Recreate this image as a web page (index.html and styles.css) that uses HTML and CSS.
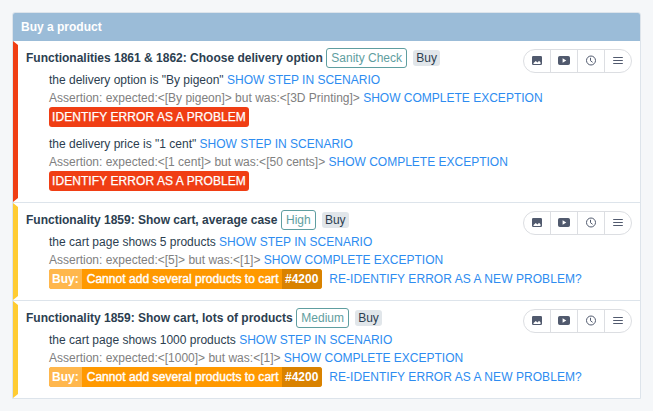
FILE: index.html
```
<!DOCTYPE html>
<html lang="en">
<head>
<meta charset="utf-8">
<title>Buy a product</title>
<link rel="stylesheet" href="styles.css">
</head>
<body>
<svg class="defs" width="0" height="0" aria-hidden="true">
  <symbol id="i-image" viewBox="0 0 12 12"><path fill="currentColor" fill-rule="evenodd" d="M2.200 1h7.600q1.200 0 1.200 1.200v6.600q0 1.200-1.200 1.200H2.200Q1 10 1 8.800V2.200Q1 1 2.200 1zM2.500 9h7V7.300L8 5.800 6.500 7.400 4.800 6 2.500 8z"/></symbol>
  <symbol id="i-video" viewBox="0 0 12 12"><path fill="currentColor" fill-rule="evenodd" d="M1.800 1h8.400Q12 1 12 2.800v5.400q0 1.800-1.800 1.800H1.800Q0 10 0 8.200V2.800Q0 1 1.800 1zM4.600 3.200v4.600L8.300 5.500z"/></symbol>
  <symbol id="i-clock" viewBox="0 0 12 12"><g fill="none" stroke="currentColor"><circle cx="6" cy="5.500" r="4.500"/><path d="M5.500 2.800V5.700L7.600 7.300"/></g></symbol>
  <symbol id="i-menu" viewBox="0 0 12 12"><path fill="none" stroke="currentColor" d="M1.200 2.500h9.600M1.200 5.500h9.600M1.200 8.500h9.600"/></symbol>
</svg>
<main class="card">
  <header class="card-header">Buy a product</header>

  <section class="item failed">
    <div class="content">
      <h2 class="title"><span>Functionalities 1861 &amp; 1862: Choose delivery option</span><span class="level">Sanity Check</span><span class="team">Buy</span></h2>
      <div class="step">
        <p>the delivery option is "By pigeon" <a>SHOW STEP IN SCENARIO</a></p>
        <p class="error">Assertion: expected:&lt;[By pigeon]&gt; but was:&lt;[3D Printing]&gt; <a>SHOW COMPLETE EXCEPTION</a></p>
        <div class="problem"><a class="identify">IDENTIFY ERROR AS A PROBLEM</a></div>
      </div>
      <div class="step">
        <p>the delivery price is "1 cent" <a>SHOW STEP IN SCENARIO</a></p>
        <p class="error">Assertion: expected:&lt;[1 cent]&gt; but was:&lt;[50 cents]&gt; <a>SHOW COMPLETE EXCEPTION</a></p>
        <div class="problem"><a class="identify">IDENTIFY ERROR AS A PROBLEM</a></div>
      </div>
    </div>
    <nav class="actions"><a><svg><use href="#i-image"/></svg></a><a><svg><use href="#i-video"/></svg></a><a><svg><use href="#i-clock"/></svg></a><a><svg><use href="#i-menu"/></svg></a></nav>
  </section>

  <section class="item known">
    <div class="content">
      <h2 class="title"><span>Functionality 1859: Show cart, average case</span><span class="level">High</span><span class="team">Buy</span></h2>
      <div class="step">
        <p>the cart page shows 5 products <a>SHOW STEP IN SCENARIO</a></p>
        <p class="error">Assertion: expected:&lt;[5]&gt; but was:&lt;[1]&gt; <a>SHOW COMPLETE EXCEPTION</a></p>
        <div class="problem"><span class="ticket"><b class="owner">Buy:</b><span class="name">Cannot add several products to cart</span><b class="number">#4200</b></span><a class="reidentify">RE-IDENTIFY ERROR AS A NEW PROBLEM?</a></div>
      </div>
    </div>
    <nav class="actions"><a><svg><use href="#i-image"/></svg></a><a><svg><use href="#i-video"/></svg></a><a><svg><use href="#i-clock"/></svg></a><a><svg><use href="#i-menu"/></svg></a></nav>
  </section>

  <section class="item known">
    <div class="content">
      <h2 class="title"><span>Functionality 1859: Show cart, lots of products</span><span class="level">Medium</span><span class="team">Buy</span></h2>
      <div class="step">
        <p>the cart page shows 1000 products <a>SHOW STEP IN SCENARIO</a></p>
        <p class="error">Assertion: expected:&lt;[1000]&gt; but was:&lt;[1]&gt; <a>SHOW COMPLETE EXCEPTION</a></p>
        <div class="problem"><span class="ticket"><b class="owner">Buy:</b><span class="name">Cannot add several products to cart</span><b class="number">#4200</b></span><a class="reidentify">RE-IDENTIFY ERROR AS A NEW PROBLEM?</a></div>
      </div>
    </div>
    <nav class="actions"><a><svg><use href="#i-image"/></svg></a><a><svg><use href="#i-video"/></svg></a><a><svg><use href="#i-clock"/></svg></a><a><svg><use href="#i-menu"/></svg></a></nav>
  </section>
</main>
</body>
</html>
```

FILE: styles.css
```
* { box-sizing: border-box; }

body {
  margin: 0;
  padding: 12px;
  background: #f5f7f9;
  color: #2c3e50;
  font: 12px/18px "Liberation Sans", Arial, sans-serif;
  white-space: nowrap;
}

.defs { position: absolute; }

.card {
  width: 629px;
  background: #fff;
  border: 1px solid #dde4eb;
  border-radius: 3px 3px 0 0;
}

.card-header {
  height: 28px;
  padding-left: 8px;
  border-radius: 2px 2px 0 0;
  background: #9bbcd8;
  color: #fff;
  font-weight: bold;
  line-height: 28px;
}

.item {
  display: flex;
  align-items: flex-start;
}

.item + .item { border-top: 1px solid #dde4eb; }

.item::before {
  content: "";
  align-self: stretch;
  width: 5px;
  clip-path: polygon(0 0, 100% 4px, 100% calc(100% - 4px), 0 100%);
}

.failed::before { background: #f03e14; }
.known::before { background: #ffcc33; }

.content {
  flex: 1;
  min-width: 0;
  padding: 8px 0 11px 8px;
}

.title {
  display: flex;
  align-items: center;
  height: 18px;
  margin: 0 0 4px;
  font-size: 12px;
  line-height: 18px;
}

.level,
.team {
  color: #5f9ea0;
  font-weight: normal;
  border-radius: 3px;
}

.level {
  margin-left: 3.4px;
  padding: 0 4.2px;
  border: 1px solid #5f9ea0;
}

.team {
  margin-left: 6px;
  padding: 0 3px;
  background: #e1e6ea;
  color: #2c3e50;
  line-height: 16px;
}

.step { margin-left: 23px; }
.step + .step { margin-top: 8px; }
.step p { margin: 0; }
.step a { color: #2d8cf0; }
.step .error { color: #808080; }

.problem {
  display: flex;
  height: 20px;
  line-height: 20px;
}

.step .identify {
  padding: 0 3px;
  border-radius: 3px;
  background: #f03e14;
  color: #fff;
  letter-spacing: 0.075px;
  -webkit-text-stroke: 0.25px;
}

.ticket {
  display: flex;
  flex-shrink: 0;
  margin-right: 7.5px;
  overflow: hidden;
  border-radius: 3px;
  background: #ff9900;
  color: #fff;
}

.owner { padding: 0 3px; background: #ffb74d; }

.name {
  width: 200px;
  padding: 0 5px;
  letter-spacing: 0.05px;
  -webkit-text-stroke: 0.4px;
}

.number {
  width: 40px;
  background: #d98200;
  text-align: center;
}

.reidentify { letter-spacing: 0.06px; }

.actions {
  display: flex;
  width: 109px;
  height: 24px;
  margin: 8px 8px 0 0;
  border: 1px solid #dcdee2;
  border-radius: 12px;
}

.actions a {
  display: flex;
  flex: 1;
  align-items: center;
  justify-content: center;
  color: #515a6e;
}

.actions a + a { border-left: 1px solid #dcdee2; }
.actions svg { width: 12px; height: 12px; }
```
